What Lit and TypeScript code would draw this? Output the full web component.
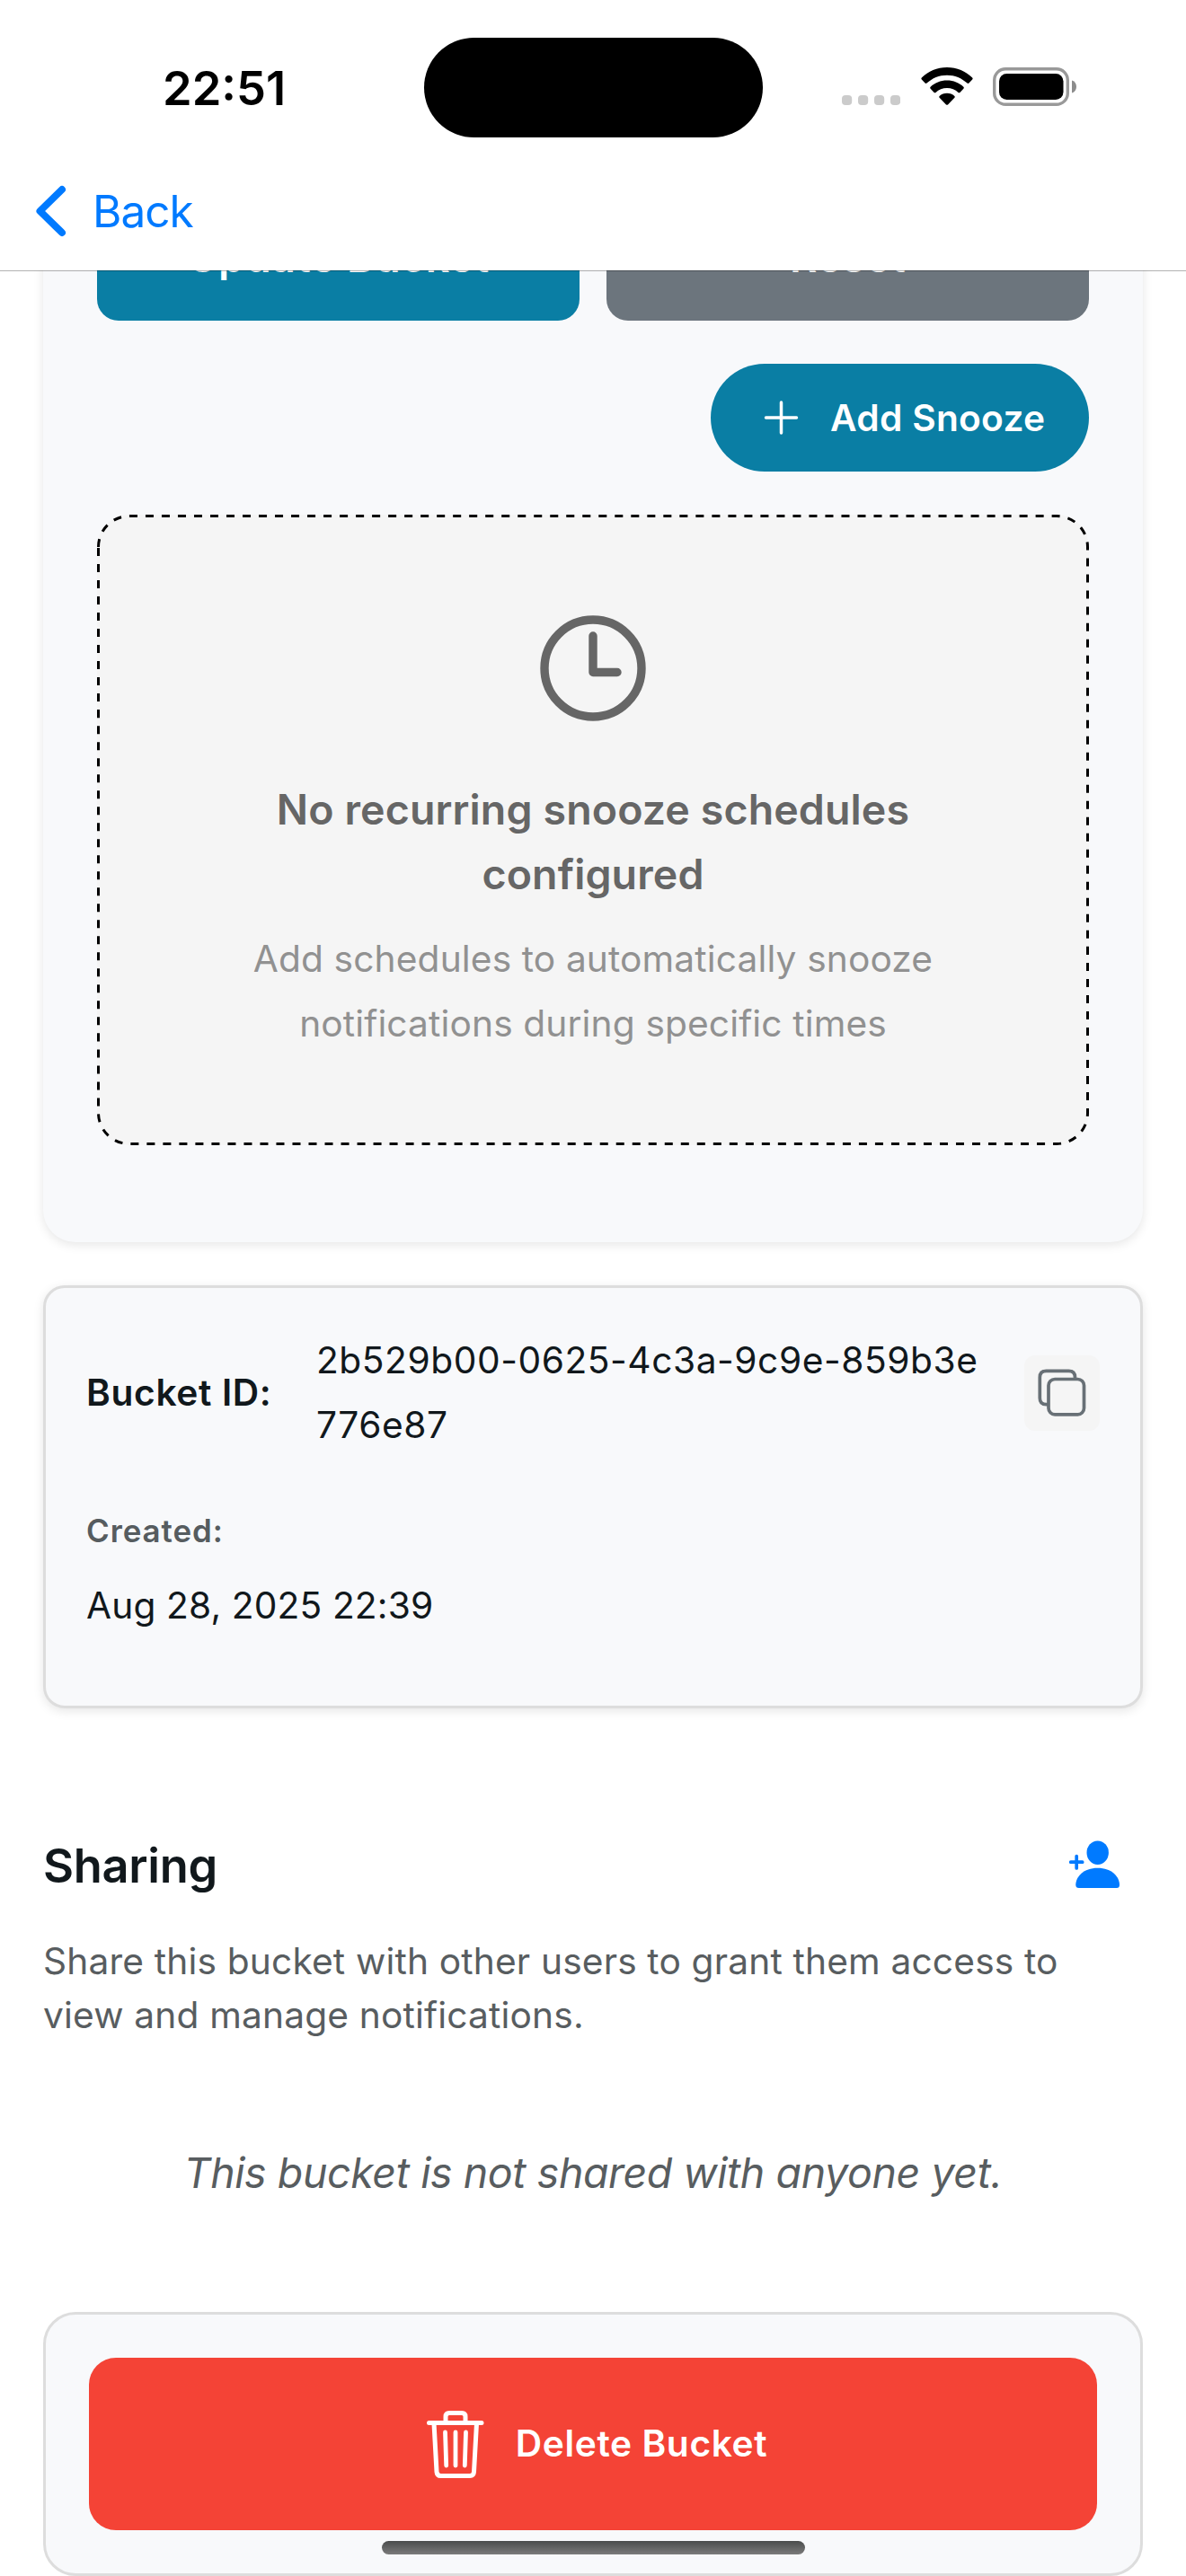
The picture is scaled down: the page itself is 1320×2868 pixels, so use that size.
import { LitElement, css, html, svg } from "lit";
import { customElement, property } from "lit/decorators.js";

@customElement("status-bar")
export class StatusBar extends LitElement {
  @property() time = "22:51";

  static styles = css`
    :host {
      display: grid;
      grid-template-columns: 472px 377px 1fr;
      height: 153px;
      box-sizing: border-box;
      padding-top: 42px;
    }
    .time {
      padding-left: 181px;
      font-size: 52.4px;
      font-weight: 600;
      line-height: 112px;
      color: #000;
    }
    .island {
      background: #000;
      border-radius: 56px;
      height: 111px;
    }
    .signals {
      display: flex;
      align-items: center;
      height: 109px;
      padding-left: 88px;
    }
    .dots { width: 65px; height: 43px; margin-right: 22px; }
    .wifi { width: 60px; height: 43px; margin-right: 21px; }
    .battery { width: 94px; height: 43px; }
  `;

  render() {
    return html`
      <div class="time">${this.time}</div>
      <div class="island"></div>
      <div class="signals">
        <svg class="dots" viewBox="0 0 65 43" fill="#cbcbcb">
          ${[0, 18, 36, 54].map((x) => svg`<rect x=${x} y="31" width="11.200" height="11" rx="4"></rect>`)}
        </svg>
        <svg class="wifi" viewBox="0 0 60 43" fill="#000">
          <path d="M30 0C41 0 51 4.400 58.200 11.500Q59.200 12.500 58.200 13.500L54.400 17.600Q53.500 18.500 52.500 17.600C46.500 12 38.700 8.700 30 8.700S13.500 12 7.500 17.600Q6.500 18.500 5.600 17.600L1.800 13.500Q.8 12.500 1.800 11.500C9 4.400 19 0 30 0Z" />
          <path d="M30 14.500C37.200 14.500 43.600 17.200 48.400 21.700Q49.400 22.700 48.400 23.700L44.400 27.900Q43.500 28.700 42.500 27.900C39.200 24.900 34.800 23.100 30 23.100S20.800 24.900 17.500 27.900Q16.500 28.700 15.600 27.900L11.600 23.700Q10.600 22.700 11.600 21.700C16.400 17.200 22.800 14.500 30 14.500Z" />
          <path d="M30 28.800C33.200 28.800 36.200 30 38.400 31.900Q39.300 32.800 38.400 33.700L31 41.400Q30 42.300 29 41.400L21.600 33.700Q20.700 32.800 21.600 31.900C23.800 30 26.800 28.800 30 28.800Z" />
        </svg>
        <svg class="battery" viewBox="0 0 94 43">
          <rect x="1.700" y="1.700" width="81.600" height="39.600" rx="12.500" fill="none" stroke="#999" stroke-width="3.400" />
          <rect x="7" y="7" width="71.500" height="29" rx="8.500" />
          <path d="M88 14.500C91.500 15.500 93 18.200 93 21.500S91.500 27.500 88 28.500Z" fill="#8c8c8c" />
        </svg>
      </div>
    `;
  }
}

@customElement("app-root")
export class AppRoot extends LitElement {
  static styles = css`
    :host {
      display: block;
      width: 1320px;
      height: 2868px;
      position: relative;
      overflow: hidden;
      background: #fff;
      color: #11181c;
      font-family: Inter, "Liberation Sans", sans-serif;
    }
    svg { display: block; flex: none; }
    p, h2, h3 { margin: 0; font-weight: 400; }

    .header {
      position: relative;
      z-index: 1;
      height: 302px;
      box-sizing: border-box;
      background: #fff;
      background-clip: padding-box;
      border-bottom: 1px solid rgba(0, 0, 0, 0.3);
    }
    .nav {
      display: flex;
      align-items: center;
      height: 132px;
      padding: 16px 0 0 37px;
      color: #007aff;
      font-size: 49.5px;
      letter-spacing: -0.95px;
    }
    .chevron { width: 40px; height: 60px; margin-right: 26px; }

    .content { margin-top: -149px; padding: 0 48px; }

    .settings {
      display: flex;
      flex-direction: column;
      gap: 48px;
      padding: 60px 60px 108px;
      border-radius: 36px;
      background: #f8f9fb;
      box-shadow: 0 3px 12px rgba(0, 0, 0, 0.1);
    }
    .actions { display: flex; gap: 30px; }
    .button {
      flex: 1;
      height: 144px;
      border-radius: 24px;
      color: #fff;
      font-size: 46.5px;
      font-weight: 600;
      line-height: 147px;
      letter-spacing: 0.5px;
      text-align: center;
    }
    .primary { background: #0a7ea4; }
    .neutral { background: #6c757d; }
    .add {
      align-self: flex-end;
      display: flex;
      align-items: center;
      gap: 25px;
      width: 421px;
      height: 120px;
      box-sizing: border-box;
      padding-left: 48px;
      border-radius: 60px;
      background: #0a7ea4;
      color: #fff;
      font-size: 40.7px;
      font-weight: 600;
      letter-spacing: 0.28px;
    }
    .plus { width: 60px; height: 60px; }

    .empty {
      position: relative;
      height: 702px;
      box-sizing: border-box;
      padding: 111px 99px 0;
      border-radius: 36px;
      background: #f5f5f5;
      text-align: center;
    }
    .outline { position: absolute; inset: 0; width: 1104px; height: 702px; }
    .clock { width: 120px; height: 120px; margin: 0 auto; }
    .empty-title {
      margin-top: 61px;
      font-size: 46.5px;
      font-weight: 600;
      line-height: 72px;
      letter-spacing: 0.12px;
      color: #666;
    }
    .empty-text {
      margin-top: 23px;
      font-size: 40.7px;
      line-height: 72px;
      letter-spacing: 0.12px;
      color: #919191;
    }

    .info {
      height: 471px;
      box-sizing: border-box;
      margin-top: 48px;
      padding: 45px;
      border: 3px solid #ddd;
      border-radius: 24px;
      background: #f8f9fb;
      box-shadow: 0 3px 12px rgba(0, 0, 0, 0.1);
      font-size: 40.7px;
      line-height: 72px;
    }
    .id-row { display: flex; align-items: center; }
    .id-label { width: 256px; font-weight: 600; letter-spacing: 0.65px; }
    .id-value { width: 752px; letter-spacing: 0.55px; word-break: break-all; }
    .copy {
      display: flex;
      align-items: center;
      justify-content: center;
      width: 84px;
      height: 84px;
      margin-left: 36px;
      border-radius: 12px;
      background: #f5f5f5;
    }
    .copy svg { width: 60px; height: 60px; }
    .created-label {
      margin-top: 45px;
      font-size: 34.9px;
      font-weight: 600;
      letter-spacing: 0.95px;
      color: #565c5f;
    }
    .created-value { margin-top: 12px; letter-spacing: 0.13px; }

    .sharing-head {
      display: flex;
      align-items: center;
      justify-content: space-between;
      height: 114px;
      margin-top: 118px;
      padding-right: 24px;
    }
    .sharing-title { font-size: 52.4px; font-weight: 600; letter-spacing: -0.3px; }
    .person { width: 60px; height: 60px; }
    .sharing-text {
      margin-top: 20px;
      padding-right: 30px;
      font-size: 40.7px;
      line-height: 60px;
      letter-spacing: 0.16px;
      color: #585d60;
    }
    .unshared {
      margin-top: 109px;
      font-size: 46.5px;
      font-style: italic;
      line-height: 72px;
      letter-spacing: -0.42px;
      text-align: center;
      color: #585d60;
    }

    .danger {
      height: 294px;
      box-sizing: border-box;
      margin-top: 119px;
      padding: 48px;
      border: 3px solid #ddd;
      border-radius: 36px;
      background: #f8f9fb;
    }
    .delete {
      display: flex;
      align-items: center;
      justify-content: center;
      gap: 31px;
      height: 192px;
      box-sizing: border-box;
      padding-left: 5px;
      border-radius: 30px;
      background: #f44336;
      color: #fff;
      font-size: 40.7px;
      font-weight: 600;
      letter-spacing: 0.6px;
    }
    .delete span { padding-bottom: 2px; }
    .trash { width: 72px; height: 84px; }
    .home {
      position: absolute;
      left: 425px;
      bottom: 24px;
      width: 471px;
      height: 15px;
      border-radius: 8px;
      background: linear-gradient(#4a4c4c, #7b7b7b);
    }
  `;

  render() {
    return html`
      <header class="header">
        <status-bar></status-bar>
        <div class="nav">
          <svg class="chevron" viewBox="0 0 40 60" fill="none" stroke="#007aff" stroke-width="8" stroke-linecap="round" stroke-linejoin="round">
            <path d="M32 6L7.500 30L32 54" />
          </svg>
          <span>Back</span>
        </div>
      </header>

      <main class="content">
        <section class="settings">
          <div class="actions">
            <div class="button primary">Update Bucket</div>
            <div class="button neutral">Reset</div>
          </div>
          <div class="add">
            <svg class="plus" viewBox="0 0 60 60" stroke="#fff" stroke-width="3.500" stroke-linecap="round">
              <path d="M30.500 13V47M13.500 30H47.500" />
            </svg>
            <span>Add Snooze</span>
          </div>
          <div class="empty">
            <svg class="outline" viewBox="0 0 1104 702" fill="none" stroke="#000" stroke-width="3">
              <path
                pathLength="3538"
                stroke-dasharray="9 9"
                d="M1.500 36A34.500 34.500 0 0 1 36 1.500H1068A34.500 34.500 0 0 1 1102.500 36V666A34.500 34.500 0 0 1 1068 700.500H36A34.500 34.500 0 0 1 1.500 666Z"
              />
            </svg>
            <svg class="clock" viewBox="0 0 120 120" fill="none" stroke="#666" stroke-width="9.400" stroke-linecap="round" stroke-linejoin="round">
              <circle cx="60" cy="60" r="54" />
              <path d="M60 24V64.500H87" />
            </svg>
            <h3 class="empty-title">No recurring snooze schedules configured</h3>
            <p class="empty-text">Add schedules to automatically snooze notifications during specific times</p>
          </div>
        </section>

        <section class="info">
          <div class="id-row">
            <div class="id-label">Bucket ID:</div>
            <div class="id-value">2b529b00-0625-4c3a-9c9e-859b3e776e87</div>
            <div class="copy">
              <svg viewBox="0 0 60 60" fill="none" stroke="#687076" stroke-width="3.700">
                <path d="M14.500 42.700H12.500Q5.300 42.700 5.300 35.500V12.500Q5.300 5.300 12.500 5.300H37.500Q44.500 5.300 44.500 12.500V14.500" />
                <rect x="15" y="14.500" width="39.500" height="39.300" rx="7" />
              </svg>
            </div>
          </div>
          <div class="created-label">Created:</div>
          <div class="created-value">Aug 28, 2025 22:39</div>
        </section>

        <section>
          <div class="sharing-head">
            <h2 class="sharing-title">Sharing</h2>
            <svg class="person" viewBox="0 0 60 60" fill="#007aff">
              <ellipse cx="33.700" cy="15.700" rx="12.200" ry="13.200" />
              <path d="M12.800 55H54.800Q58 55 58 51.500C58 42.500 49.500 32.700 33.700 32.700S9.300 42.500 9.300 51.500Q9.300 55 12.800 55Z" />
              <path d="M10.200 19.500V33M3.700 26.200H16.700" stroke="#007aff" stroke-width="3.700" stroke-linecap="round" />
            </svg>
          </div>
          <p class="sharing-text">Share this bucket with other users to grant them access to view and manage notifications.</p>
          <p class="unshared">This bucket is not shared with anyone yet.</p>
        </section>

        <section class="danger">
          <div class="delete">
            <svg class="trash" viewBox="0 0 72 84" fill="none" stroke="#fff" stroke-width="5" stroke-linecap="round" stroke-linejoin="round">
              <path d="M6.500 18.500H65M25 18V11.500Q25 7.500 29 7.500H43Q47 7.500 47 11.500V18M12 19L15 73Q15.300 77.500 19.500 77.500H52Q56.300 77.500 56.500 73L59.500 19" />
              <path d="M24.500 29L25.700 66M36 29V66M47.500 29L46.300 66" stroke-width="4.800" />
            </svg>
            <span>Delete Bucket</span>
          </div>
        </section>
      </main>
      <div class="home"></div>
    `;
  }
}
